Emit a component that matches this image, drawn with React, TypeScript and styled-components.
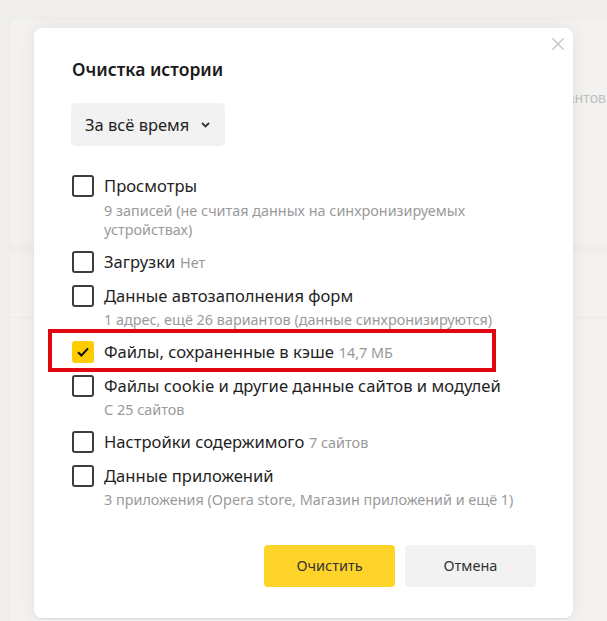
import styled, { createGlobalStyle } from 'styled-components';

const GlobalStyle = createGlobalStyle`
    html, body {
        margin: 0;
        padding: 0;
        background: #efeeec;
        font-family: "Noto Sans", "Open Sans", sans-serif;
        color: #1f1f1f;
    }
`;

const Screen = styled.div`
    position: relative;
    width: 607px;
    height: 621px;
    overflow: hidden;
    background: #efeeec;
`;

// dimmed settings page behind the modal
const BackPage = styled.div`
    height: 100%;
    padding: 20px 0 0 10px;
    box-sizing: border-box;
`;

const BackCard = styled.div`
    height: 100%;
    background: #f3f2f0;
    border-radius: 8px 0 0 0;
    display: flex;
    flex-direction: column;
`;

const BackRow = styled.div<{ h: number; tone?: string }>`
    flex: none;
    height: ${({ h }) => h}px;
    background: ${({ tone }) => tone || 'transparent'};
    display: flex;
    align-items: center;
    justify-content: flex-end;
`;

const BackLine = styled.div`
    height: 1px;
    background: #ebeae8;
`;

const BackText = styled.span`
    font-family: "Liberation Sans", Arial, sans-serif;
    font-size: 15px;
    color: #c2c1bf;
    margin-right: 1px;
    white-space: nowrap;
`;

const Overlay = styled.div`
    position: absolute;
    inset: 0;
    display: flex;
    justify-content: center;
    align-items: flex-start;
    padding-top: 28px;
`;

const Dialog = styled.div`
    position: relative;
    width: 539px;
    height: 590px;
    box-sizing: border-box;
    background: #fff;
    border-radius: 8px;
    box-shadow: 0 0 18px rgba(0, 0, 0, 0.07), 0 1px 2px rgba(0, 0, 0, 0.06);
    padding: 28px 38px 31px 38px;
    display: flex;
    flex-direction: column;
`;

const CloseButton = styled.button`
    position: absolute;
    top: 4px;
    right: 3px;
    width: 24px;
    height: 24px;
    padding: 0;
    border: none;
    background: none;
    display: flex;
    align-items: center;
    justify-content: center;
    cursor: pointer;
`;

const Title = styled.h2`
    margin: 0;
    font-size: 17.5px;
    line-height: 26px;
    font-weight: 600;
    color: #1a1a1a;
`;

const Select = styled.button`
    align-self: flex-start;
    margin-top: 21px;
    margin-left: -1px;
    height: 43px;
    padding: 0 15px 0 14px;
    border: none;
    border-radius: 5px;
    background: #f2f2f2;
    display: flex;
    align-items: center;
    gap: 12px;
    font-family: inherit;
    font-size: 16.5px;
    color: #1f1f1f;
    cursor: pointer;
`;

const List = styled.div`
    margin-top: 29px;
    display: flex;
    flex-direction: column;
    gap: 11px;
`;

const Item = styled.div`
    position: relative;
    display: flex;
    gap: 10px;
`;

const Box = styled.span<{ checked?: boolean }>`
    flex: none;
    width: 22px;
    height: 22px;
    box-sizing: border-box;
    border-radius: 3px;
    border: ${({ checked }) => (checked ? 'none' : '2px solid #3d3d3d')};
    background: ${({ checked }) => (checked ? '#ffcc00' : '#fff')};
    display: flex;
    align-items: center;
    justify-content: center;
`;

const Texts = styled.div`
    min-width: 0;
`;

const Label = styled.div`
    font-size: 16.6px;
    line-height: 22px;
    color: #1f1f1f;
`;

const Note = styled.span`
    font-size: 14.4px;
    color: #999;
    margin-left: 1px;
`;

const Sub = styled.div`
    margin-top: 3.5px;
    font-size: 14.4px;
    line-height: 19.5px;
    color: #9a9a9a;
`;

const Highlight = styled.div`
    position: absolute;
    left: -24px;
    top: -12px;
    width: 448px;
    height: 43px;
    box-sizing: border-box;
    border: 4px solid #e30613;
    pointer-events: none;
`;

const Footer = styled.div`
    margin-top: auto;
    display: flex;
    justify-content: flex-end;
    gap: 10px;
    margin-right: -1px;
`;

const Action = styled.button<{ primary?: boolean }>`
    width: 131px;
    height: 42px;
    padding-bottom: 3px;
    border: none;
    border-radius: 4px;
    background: ${({ primary }) => (primary ? '#fed42b' : '#f2f2f2')};
    font-family: inherit;
    font-size: 14.5px;
    color: #333;
    cursor: pointer;
`;

const items = [
    { label: 'Просмотры', sub: '9 записей (не считая данных на синхронизируемых устройствах)' },
    { label: 'Загрузки', note: 'Нет' },
    { label: 'Данные автозаполнения форм', sub: '1 адрес, ещё 26 вариантов (данные синхронизируются)' },
    { label: 'Файлы, сохраненные в кэше', note: '14,7 МБ', checked: true, marked: true },
    { label: 'Файлы cookie и другие данные сайтов и модулей', sub: 'С 25 сайтов' },
    { label: 'Настройки содержимого', note: '7 сайтов' },
    { label: 'Данные приложений', sub: '3 приложения (Opera store, Магазин приложений и ещё 1)' },
];

export default function App() {
    return (
        <Screen>
            <GlobalStyle />
            <BackPage>
                <BackCard>
                    <BackRow h={40} />
                    <BackRow h={74}>
                        <BackText>вариантов</BackText>
                    </BackRow>
                    <BackRow h={110} />
                    <BackRow h={9} tone="#efeeec" />
                    <BackRow h={64} />
                    <BackLine />
                </BackCard>
            </BackPage>

            <Overlay>
                <Dialog>
                    <CloseButton aria-label="Закрыть">
                        <svg width="12" height="12" viewBox="0 0 12 12">
                            <path d="M0.5 0.5 L11.5 11.5 M11.5 0.5 L0.5 11.5" stroke="#c2c2c2" strokeWidth="1.3" />
                        </svg>
                    </CloseButton>

                    <Title>Очистка истории</Title>

                    <Select>
                        За всё время
                        <svg width="9" height="6" viewBox="0 0 9 6">
                            <path d="M1 1 L4.5 4.5 L8 1" stroke="#333" strokeWidth="1.8" fill="none" />
                        </svg>
                    </Select>

                    <List>
                        {items.map((it) => (
                            <Item key={it.label}>
                                {it.marked && <Highlight />}
                                <Box checked={it.checked}>
                                    {it.checked && (
                                        <svg width="14" height="12" viewBox="0 0 14 12">
                                            <path d="M2 6.2 L5.4 9.4 L12 2.4" stroke="#111" strokeWidth="2.1" fill="none" />
                                        </svg>
                                    )}
                                </Box>
                                <Texts>
                                    <Label>
                                        {it.label}
                                        {it.note && <Note> {it.note}</Note>}
                                    </Label>
                                    {it.sub && <Sub>{it.sub}</Sub>}
                                </Texts>
                            </Item>
                        ))}
                    </List>

                    <Footer>
                        <Action primary>Очистить</Action>
                        <Action>Отмена</Action>
                    </Footer>
                </Dialog>
            </Overlay>
        </Screen>
    );
}
